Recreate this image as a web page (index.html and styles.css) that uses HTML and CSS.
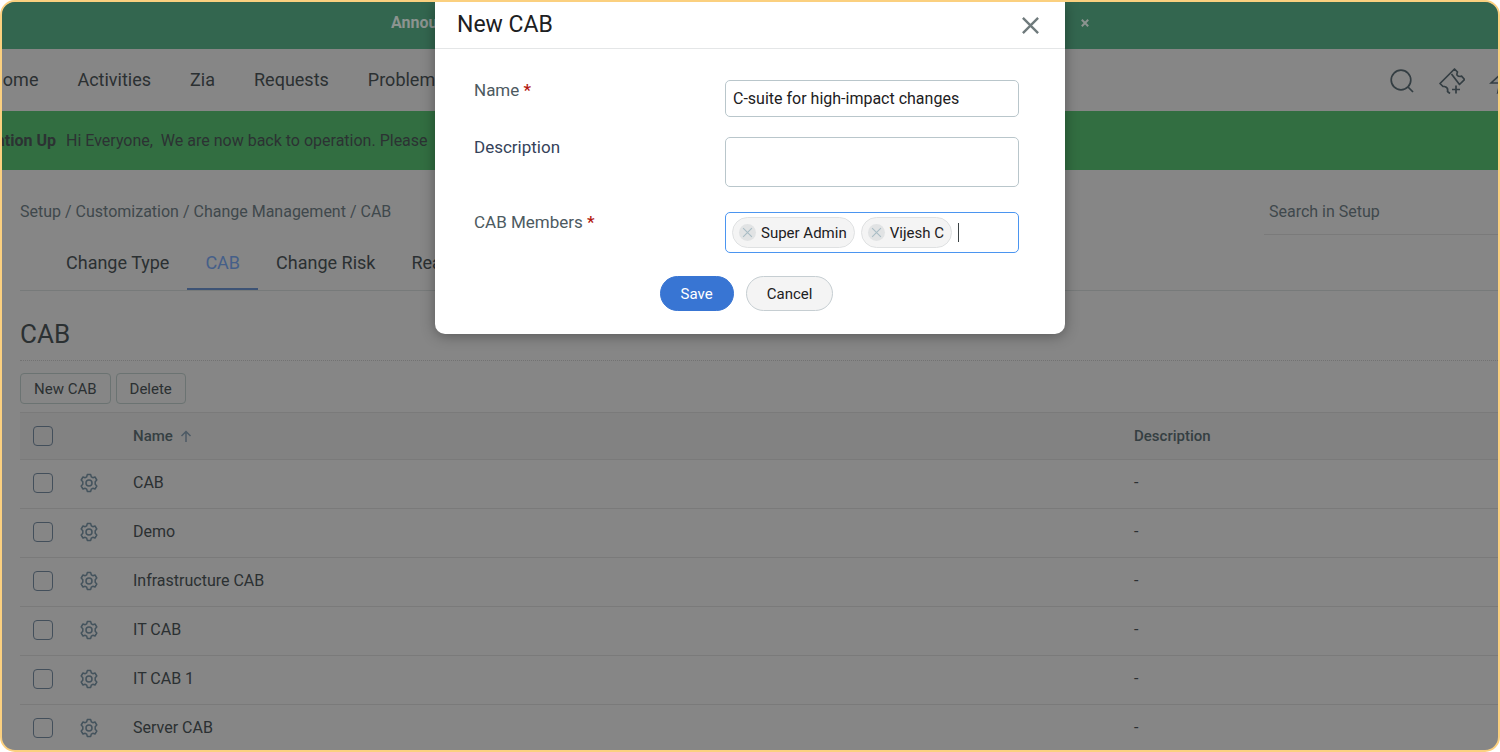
FILE: index.html
```html
<!DOCTYPE html>
<html lang="en">
<head>
    <meta charset="UTF-8">
    <meta name="viewport" content="width=device-width, initial-scale=1.0">
    <title>CAB - Setup</title>
    <link rel="stylesheet" href="styles.css">
</head>
<body>
    <svg class="sprite" aria-hidden="true">
        <symbol id="gear" viewBox="0 0 20 20">
            <path d="M8.3 1.6h3.4l.6 2.2 1.5.9 2.2-.7 1.8 3-1.6 1.7v2.6l1.6 1.7-1.8 3-2.2-.7-1.5.9-.6 2.2H8.3l-.6-2.2-1.5-.9-2.2.7-1.8-3 1.6-1.7V8.7L2.2 7 4 4l2.2.7 1.5-.9z" stroke-linejoin="round"/>
            <circle cx="10" cy="10" r="3"/>
        </symbol>
        <symbol id="cross" viewBox="0 0 20 20">
            <path d="M2 2l16 16M18 2L2 18"/>
        </symbol>
    </svg>

    <div class="frame">
        <div class="announcement">
            <div class="announcement-inner">
                <strong>Announcement</strong>
                <button type="button" class="announcement-close" aria-label="Close announcement"><svg><use href="#cross"/></svg></button>
            </div>
        </div>

        <header class="topbar">
            <nav class="main-nav">
                <a href="#">Home</a>
                <a href="#">Activities</a>
                <a href="#">Zia</a>
                <a href="#">Requests</a>
                <a href="#">Problems</a>
            </nav>
            <div class="tools">
                <button type="button" aria-label="Search">
                    <svg viewBox="0 0 26 26"><circle cx="12" cy="12" r="9.8"/><path d="M19 19l5 5"/></svg>
                </button>
                <button type="button" aria-label="New request">
                    <svg viewBox="0 0 26 26"><path d="M11 25.500L8.500 23.500Q9.500 19.500 5.500 18.500L4 18.500 1 15.500 15.500 1 18.500 4Q16.500 8.500 21.500 8.500L22.500 8 25.500 11.500 20.500 16.500 12.500 6M17 17.500v8M13 21.500h8" stroke-linejoin="round"/></svg>
                </button>
                <button type="button" aria-label="Quick actions">
                    <svg viewBox="0 0 26 26"><path d="M15 3L2 15h9l-2 9 14-13h-9z"/></svg>
                </button>
            </div>
        </header>

        <div class="notice">
            <strong>Operation Up</strong>
            <span>Hi Everyone,&nbsp; We are now back to operation. Please</span>
        </div>

        <main class="content">
            <div class="setup-bar">
                <div class="breadcrumb"><a href="#">Setup</a> / <a href="#">Customization</a> / <a href="#">Change Management</a> / <a href="#">CAB</a></div>
                <input type="search" class="setup-search" placeholder="Search in Setup" aria-label="Search in Setup">
            </div>
            <nav class="tabs">
                <a href="#">Change Type</a>
                <a href="#" class="active">CAB</a>
                <a href="#">Change Risk</a>
                <a href="#">Reason</a>
            </nav>
            <h1>CAB</h1>
            <div class="actions">
                <button type="button">New CAB</button>
                <button type="button">Delete</button>
            </div>

            <table class="cab-table">
                <thead>
                    <tr>
                        <th class="col-check"><input type="checkbox" aria-label="Select all"></th>
                        <th class="col-gear"></th>
                        <th>Name <svg class="sort" viewBox="0 0 12 12"><path d="M6 12V1.500M1.500 6L6 1.500 10.500 6"/></svg></th>
                        <th class="col-desc">Description</th>
                    </tr>
                </thead>
                <tbody>
                    <tr>
                        <td><input type="checkbox" aria-label="Select CAB"></td>
                        <td><button type="button" class="gear" aria-label="Options"><svg><use href="#gear"/></svg></button></td>
                        <td>CAB</td>
                        <td>-</td>
                    </tr>
                    <tr>
                        <td><input type="checkbox" aria-label="Select Demo"></td>
                        <td><button type="button" class="gear" aria-label="Options"><svg><use href="#gear"/></svg></button></td>
                        <td>Demo</td>
                        <td>-</td>
                    </tr>
                    <tr>
                        <td><input type="checkbox" aria-label="Select Infrastructure CAB"></td>
                        <td><button type="button" class="gear" aria-label="Options"><svg><use href="#gear"/></svg></button></td>
                        <td>Infrastructure CAB</td>
                        <td>-</td>
                    </tr>
                    <tr>
                        <td><input type="checkbox" aria-label="Select IT CAB"></td>
                        <td><button type="button" class="gear" aria-label="Options"><svg><use href="#gear"/></svg></button></td>
                        <td>IT CAB</td>
                        <td>-</td>
                    </tr>
                    <tr>
                        <td><input type="checkbox" aria-label="Select IT CAB 1"></td>
                        <td><button type="button" class="gear" aria-label="Options"><svg><use href="#gear"/></svg></button></td>
                        <td>IT CAB 1</td>
                        <td>-</td>
                    </tr>
                    <tr>
                        <td><input type="checkbox" aria-label="Select Server CAB"></td>
                        <td><button type="button" class="gear" aria-label="Options"><svg><use href="#gear"/></svg></button></td>
                        <td>Server CAB</td>
                        <td>-</td>
                    </tr>
                </tbody>
            </table>
        </main>

        <div class="dialog" role="dialog" aria-labelledby="dialogTitle">
            <div class="dialog-header">
                <h2 id="dialogTitle">New CAB</h2>
                <button type="button" class="dialog-close" aria-label="Close"><svg><use href="#cross"/></svg></button>
            </div>
            <form class="dialog-form">
                <div class="form-group">
                    <label for="name">Name <span class="required">*</span></label>
                    <input type="text" id="name" name="name" value="C-suite for high-impact changes">
                </div>
                <div class="form-group">
                    <label for="description">Description</label>
                    <textarea id="description" name="description"></textarea>
                </div>
                <div class="form-group">
                    <label for="members">CAB Members <span class="required">*</span></label>
                    <div class="members">
                        <span class="chip"><button type="button" aria-label="Remove Super Admin"><svg><use href="#cross"/></svg></button>Super Admin</span>
                        <span class="chip"><button type="button" aria-label="Remove Vijesh C"><svg><use href="#cross"/></svg></button>Vijesh C</span>
                        <span class="caret"></span>
                        <input type="text" id="members" name="members">
                    </div>
                </div>
                <div class="dialog-buttons">
                    <button type="submit" class="save">Save</button>
                    <button type="button" class="cancel">Cancel</button>
                </div>
            </form>
        </div>
    </div>
</body>
</html>
```
FILE: styles.css
```css
* {
    box-sizing: border-box;
}
body {
    margin: 0;
    background-color: #ffffff;
    color: #2b3032;
    font-family: Roboto, Arial, sans-serif;
    font-size: 16px;
    line-height: 20px;
}
a {
    color: inherit;
    text-decoration: none;
}
button, input, textarea {
    font-family: inherit;
    font-size: inherit;
    color: inherit;
}
button {
    padding: 0;
    border: none;
    background: none;
    cursor: pointer;
}
svg {
    display: block;
    width: 100%;
    height: 100%;
    fill: none;
    stroke: currentColor;
}
.sprite {
    display: none;
}
.frame {
    position: relative;
    height: 100vh;
    overflow: hidden;
    border: 2px solid #fbd07f;
    border-radius: 15px;
    background-color: #868686;
}

/* top bars */
.announcement {
    height: 47px;
    padding-top: 11px;
    background-color: #33664f;
    color: #8c9490;
}
.announcement-inner {
    display: flex;
    align-items: center;
    justify-content: space-between;
    width: 48%;
    margin: 0 auto;
}
.announcement-close {
    width: 8px;
    height: 8px;
    margin-right: 20px;
}
.announcement-close svg {
    stroke-width: 5;
}
.topbar {
    display: flex;
    align-items: center;
    justify-content: space-between;
    height: 62px;
    overflow: hidden;
}
.main-nav {
    display: flex;
    gap: 39px;
    margin-left: -12px;
    font-size: 18px;
}
.tools {
    display: flex;
    gap: 24px;
    margin-right: -17px;
    padding-top: 2px;
    color: #343e43;
}
.tools button {
    width: 26px;
    height: 26px;
}
.tools svg {
    stroke-width: 1.7;
}
.notice {
    display: flex;
    gap: 10px;
    height: 59px;
    align-items: center;
    margin-left: -40px;
    background-color: #326e41;
    color: #2c3233;
    white-space: nowrap;
}

/* setup page */
.content {
    padding-left: 18px;
}
.setup-bar {
    display: flex;
    justify-content: space-between;
    align-items: center;
    height: 66px;
    padding-top: 18px;
    color: #3f484c;
}
.setup-search {
    width: 234px;
    height: 46px;
    padding: 0 5px;
    border: none;
    border-bottom: 1px solid #7a7a7a;
    outline: none;
    background: none;
}
.setup-search::placeholder {
    color: #3f484c;
    opacity: 1;
}
.tabs {
    display: flex;
    padding-left: 28px;
    border-bottom: 1px solid #777a7a;
    font-size: 18px;
}
.tabs a {
    height: 54px;
    padding: 17px 18px 0;
}
.tabs .active {
    margin-bottom: -1px;
    border-bottom: 2px solid #3d5375;
    color: #455f89;
}
h1 {
    margin: 0;
    padding: 27px 0 10px;
    border-bottom: 1px dotted #727272;
    font-size: 26px;
    font-weight: 400;
    line-height: 32px;
}
.actions {
    display: flex;
    gap: 5px;
    padding: 12px 0 8px;
}
.actions button {
    height: 31px;
    padding: 0 13px;
    border: 1px solid #6b7372;
    border-radius: 4px;
    font-size: 15px;
}
.cab-table {
    width: 100%;
    table-layout: fixed;
    border-collapse: collapse;
    border-top: 1px solid #7a7a7a;
}
.cab-table th, .cab-table td {
    height: 49px;
    padding: 0 0 3px;
    border-bottom: 1px solid #7a7a7a;
    text-align: left;
}
.cab-table th {
    height: 47px;
    padding-bottom: 0;
    background-color: #828282;
    color: #353f42;
    font-size: 15px;
    font-weight: 500;
}
.cab-table .col-check {
    width: 59px;
}
.cab-table .col-gear {
    width: 54px;
}
.cab-table .col-desc {
    width: 364px;
}
.cab-table input {
    display: block;
    appearance: none;
    width: 20px;
    height: 20px;
    margin: 0 0 0 13px;
    border: 1px solid #434f5b;
    border-radius: 4px;
}
.cab-table .sort {
    display: inline-block;
    width: 12px;
    height: 12px;
    margin-left: 3px;
    vertical-align: -1px;
    color: #4d5a65;
    stroke-width: 1.5;
}
.gear {
    display: block;
    width: 20px;
    height: 20px;
    color: #44535d;
}
.gear svg {
    stroke-width: 1.5;
}

/* dialog */
.dialog {
    position: absolute;
    top: 0;
    left: 0;
    right: 0;
    width: 630px;
    max-width: 100%;
    margin: 0 auto;
    border-radius: 0 0 10px 10px;
    background-color: #ffffff;
    box-shadow: 0 2px 14px rgba(0, 0, 0, 0.35);
    color: #1c2022;
}
.dialog-header {
    display: flex;
    align-items: center;
    justify-content: space-between;
    height: 47px;
    padding: 0 25px 0 22px;
    border-bottom: 1px solid #e4e6e7;
}
.dialog-header h2 {
    margin: 0;
    font-size: 23px;
    font-weight: 400;
}
.dialog-close {
    width: 19px;
    height: 19px;
    color: #6f7a7c;
}
.dialog-close svg {
    stroke-width: 2.5;
}
.dialog-form {
    padding: 31px 46px 23px 39px;
}
.form-group {
    display: flex;
    align-items: flex-start;
    justify-content: space-between;
    margin-bottom: 20px;
}
.form-group label {
    color: #4d5a5f;
    font-size: 17px;
}
.form-group label[for="description"] {
    color: #35425a;
}
.required {
    color: #b3170f;
    font-weight: 500;
}
#name, #description, .members {
    width: 294px;
    padding: 0 7px;
    border: 1px solid #b9c6cb;
    border-radius: 5px;
    background-color: #ffffff;
}
#name {
    height: 37px;
}
#description {
    height: 50px;
    margin-bottom: 5px;
    resize: none;
}
.members {
    display: flex;
    align-items: center;
    gap: 6px;
    height: 41px;
    padding-left: 6px;
    border-color: #4b95f0;
}
.chip {
    display: flex;
    align-items: center;
    gap: 5px;
    height: 31px;
    padding: 0 7px 0 6px;
    border: 1px solid #dfe1e2;
    border-radius: 16px;
    background-color: #f4f4f4;
    font-size: 15px;
    white-space: nowrap;
}
.chip button {
    width: 17px;
    height: 17px;
    padding: 3px;
    border-radius: 50%;
    background-color: #e1e3e4;
    color: #a9bdc5;
}
.chip svg {
    stroke-width: 2;
}
.members input {
    width: 0;
    flex: 1;
    padding: 0;
    border: none;
    outline: none;
}
.caret {
    width: 1px;
    height: 19px;
    background-color: #3b4244;
}
.dialog-buttons {
    display: flex;
    justify-content: center;
    gap: 12px;
    margin-top: 23px;
    font-size: 15px;
}
.dialog-buttons button {
    height: 35px;
    padding: 0 20px;
    border: 1px solid #c6ced2;
    border-radius: 18px;
    background-color: #f4f4f4;
}
.dialog-buttons .save {
    border-color: #3875d3;
    background-color: #3875d3;
    color: #ffffff;
}
```
